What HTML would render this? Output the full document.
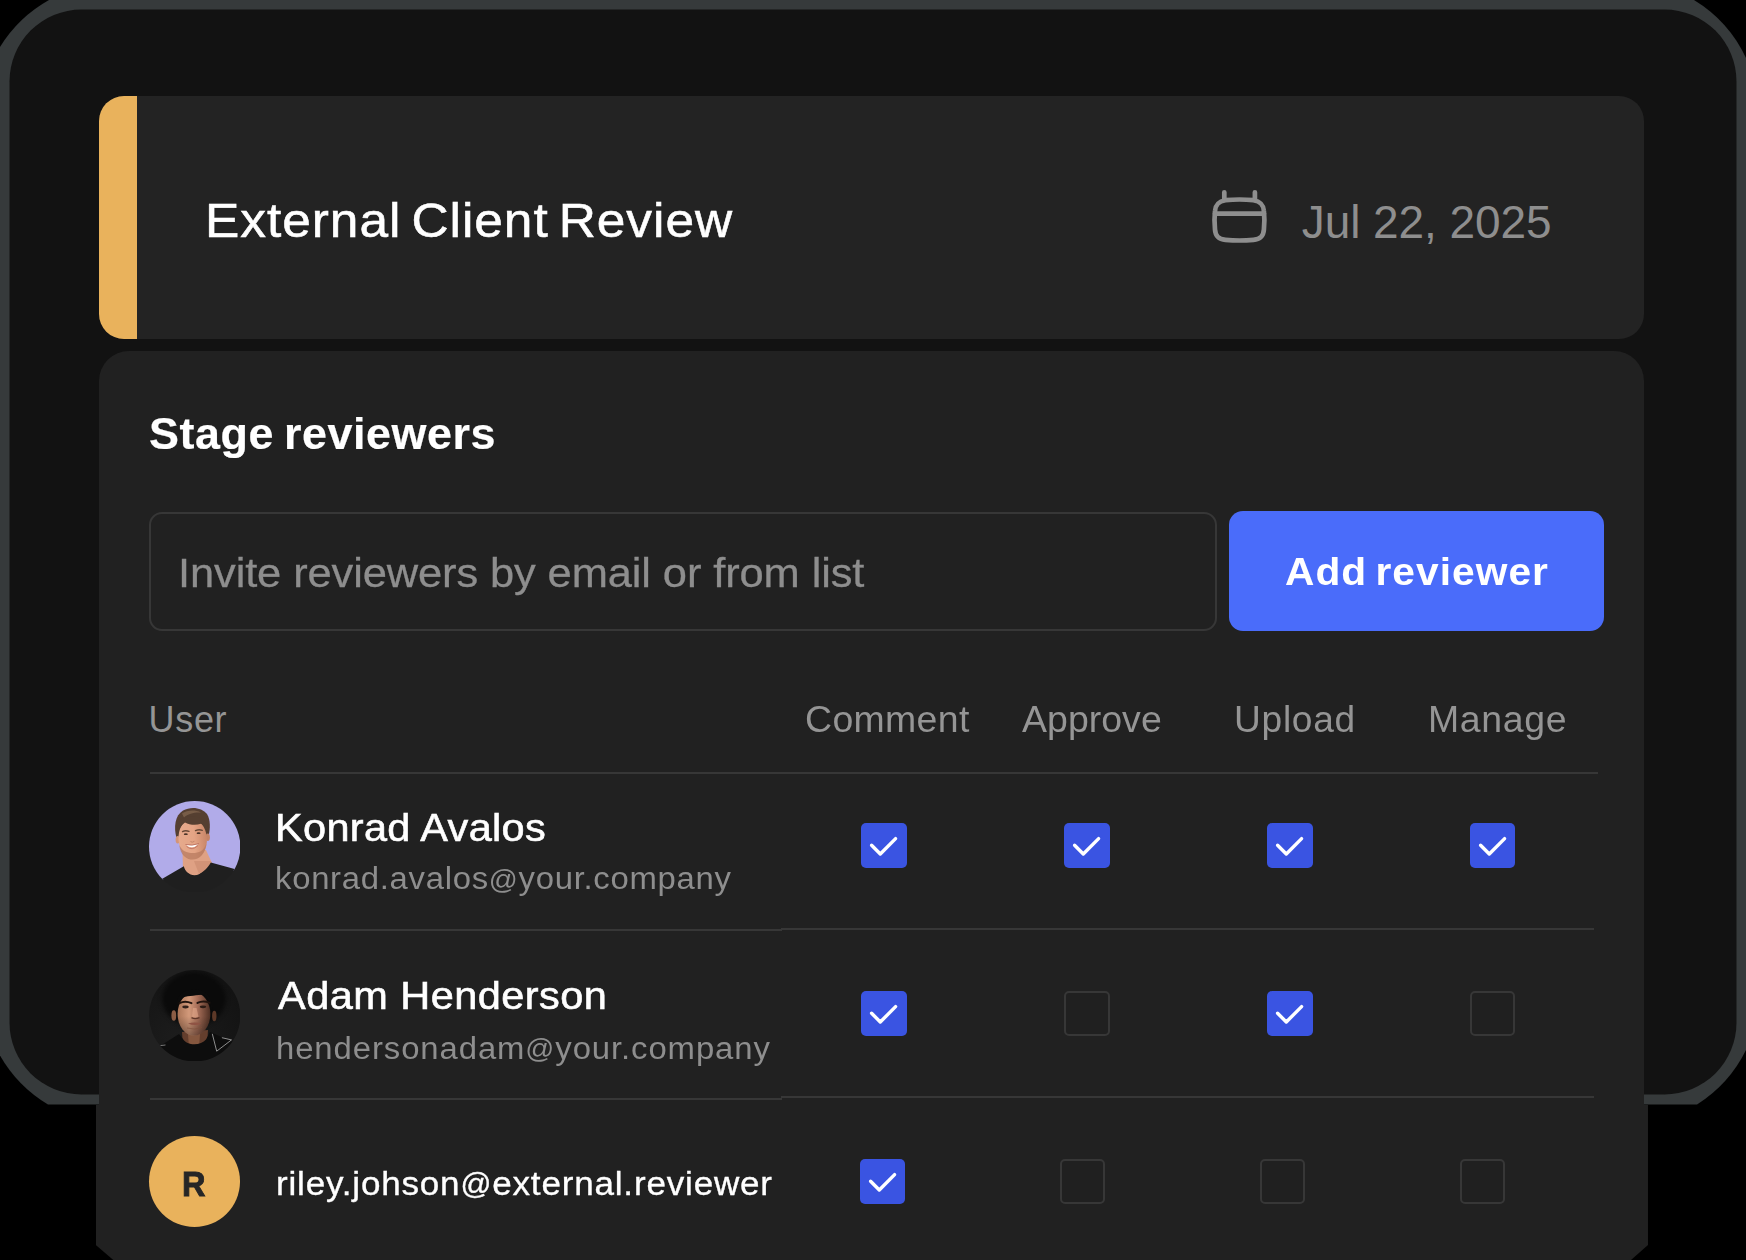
<!DOCTYPE html>
<html>
<head>
<meta charset="utf-8">
<style>
*{margin:0;padding:0;box-sizing:border-box}
html,body{width:1746px;height:1260px;background:#000;overflow:hidden}
body{position:relative;font-family:"Liberation Sans",sans-serif;color:#fff}
.abs{position:absolute}
.t{position:absolute;white-space:nowrap;line-height:1}
#hdr{left:99px;top:96px;width:1545px;height:242.5px;background:#232323;border-radius:25px;overflow:hidden}
#strip{left:0;top:0;width:38px;height:243px;background:#e9b25c}
#panel{left:99px;top:351px;width:1545px;height:756px;background:#212121;border-radius:30px 30px 0 0}
#panel2{left:95.8px;top:1104.5px;width:1552.2px;height:155.5px;background:#212121;clip-path:polygon(0 0,100% 0,100% 140.5px,1535.2px 100%,17.5px 100%,0 140.5px)}
.line{position:absolute;height:2px;background:#373737}
.cb{position:absolute;width:45.4px;height:45.4px;border-radius:5px}
.cb.on{background:#3a54e2}
.cb.off{border:2.6px solid #373737;background:#202020;border-radius:5px}
.cb svg{position:absolute;left:0;top:0}
.gray{color:#8e8e8e}
.av{position:absolute;width:91.4px;height:91.4px}
</style>
</head>
<body>
<svg id="frame" class="abs" style="left:0;top:0" width="1746" height="1260" viewBox="0 0 1746 1260">
<path d="M49 0H1694A135 135 0 0 1 1746 58V1050A135 135 0 0 1 1697 1104.5H48A135 135 0 0 1 0 1055.5V47A135 135 0 0 1 49 0Z" fill="#363a3b"/>
<rect x="9.5" y="9.5" width="1727" height="1085" rx="72" fill="#121212"/>
</svg>
<div id="hdr" class="abs"><div id="strip" class="abs"></div></div>
<div id="panel" class="abs"></div>
<div id="panel2" class="abs"></div>

<svg id="cal" class="abs" style="left:1200px;top:180px" width="80" height="72" viewBox="0 0 80 72" fill="none" stroke="#8e8e8e" stroke-width="4.7" stroke-linecap="round" stroke-linejoin="round">
<path d="M25.5 20.2Q39.45 18.8 53.4 20.2C60.5 21.4 63.4 24.5 63.9 31Q64.9 40 63.9 49.5C63.4 56.5 60.5 59.1 53.4 59.8Q39.45 61.2 25.5 59.8C18.4 59.1 15.5 56.5 15 49.5Q14 40 15 31C15.5 24.5 18.4 21.4 25.5 20.2Z"/><path d="M15 33.7H64M24.3 12.3V19.5M54.9 12.3V19.5"/></svg>

<div id="input" class="abs" style="left:149px;top:511.5px;width:1067.5px;height:119px;border:2px solid #373737;border-radius:13px"></div>
<div id="btn" class="abs" style="left:1229px;top:511px;width:374.5px;height:119.5px;background:#4a6cfa;border-radius:14px"></div>

<div class="line" style="left:149.5px;top:772.1px;width:1448px"></div>
<div class="line" style="left:149.5px;top:929.1px;width:632px"></div>
<div class="line" style="left:781px;top:928px;width:812.7px"></div>
<div class="line" style="left:149.5px;top:1097.6px;width:632px"></div>
<div class="line" style="left:781px;top:1096.4px;width:812.7px"></div>

<svg id="av1" class="av" style="left:148.9px;top:800.9px" viewBox="0 0 91.4 91.4">
<defs><clipPath id="c1"><circle cx="45.7" cy="45.7" r="45.7"/></clipPath>
<filter color-interpolation-filters="sRGB" id="b1" x="-10%" y="-10%" width="120%" height="120%"><feGaussianBlur stdDeviation="0.75"/></filter>
<linearGradient id="sk1" x1="0" x2="1"><stop offset="0" stop-color="#e6aa8c"/><stop offset="0.55" stop-color="#e4a485"/><stop offset="1" stop-color="#c98668"/></linearGradient>
</defs>
<g clip-path="url(#c1)">
<path d="M-2 -2H95V73L86.5 70.3L61.8 63.4L45 76L34.8 67.2L12.5 80.3L-2 92Z" fill="#b1abe9"/>
<g filter="url(#b1)">
<path d="M33.5 50L34 69L45.5 77L63.5 63L57 49Z" fill="#dfa184"/>
<path d="M45 60L62 60L58 69L50 73Z" fill="#c98a6e" opacity="0.6"/>
<path d="M-2 95L12.5 78.3L34.8 65.2C36 70 40 74 45.5 74.3C52 74 58 68 61.8 61.4L86.5 68.3L95 95Z" fill="#1f1f1f"/>
<path d="M27.5 37C24.5 26 26 14.5 34 9.5C42 5 53 6.5 58 13C61.5 19 61.5 27 59.6 34.5L56 37L30 39Z" fill="#553f31"/>
<ellipse cx="28.7" cy="38.8" rx="2.1" ry="3.8" fill="#d39477"/>
<ellipse cx="58.8" cy="36.2" rx="2.1" ry="3.8" fill="#c48467"/>
<ellipse cx="43.7" cy="38" rx="14.2" ry="20.2" fill="url(#sk1)" transform="rotate(-4 43.7 38)"/>
<path d="M30.3 44C31.5 54 37 58.6 43.8 58.6C50.5 58.6 56 53 57.3 43C54.5 50 50 52 43.8 52C37.5 52 33 50 30.3 44Z" fill="#b5785c" opacity="0.7"/>
<path d="M28.4 33C28 24 31 17.5 37 16C44 14.5 53 16 57.5 21.5C59 25 59.5 29 59.3 32C57.5 27 55 24 52 22.8C47 24.5 40.5 24 36 21.5C32 24 30 28 28.4 33Z" fill="#553f31"/>
<path d="M33 12.5C38 9 46 8.5 52 11.5C46 11 39 12.5 35 16.5Z" fill="#80644e" opacity="0.8"/>
<path d="M33.5 30.6Q36.5 29 40 30.4M46.5 29.7Q50 28 53.3 29.4" stroke="#6a4a38" stroke-width="1.3" fill="none" stroke-linecap="round"/>
<ellipse cx="36.8" cy="33.2" rx="2" ry="0.9" fill="#4a3328"/>
<ellipse cx="49.6" cy="32.2" rx="2" ry="0.9" fill="#4a3328"/>
<path d="M41.5 40.5Q43 42 45.5 40.3" stroke="#c4866a" stroke-width="1" fill="none"/>
<path d="M37 43.8Q43 49.3 49.4 42.9Q43 45 37 43.8Z" fill="#fff"/>
<path d="M36.5 43.5Q43 45.2 49.9 42.6" stroke="#b56a5a" stroke-width="0.8" fill="none"/>
<path d="M37.5 45.4Q43 50.4 49 44.6" stroke="#c37868" stroke-width="1" fill="none"/>
</g>
</g>
</svg>

<svg id="av2" class="av" style="left:149.1px;top:969.5px" viewBox="0 0 91.4 91.4">
<defs><clipPath id="c2"><circle cx="45.7" cy="45.7" r="45.7"/></clipPath>
<filter color-interpolation-filters="sRGB" id="b2" x="-10%" y="-10%" width="120%" height="120%"><feGaussianBlur stdDeviation="0.6"/></filter>
<filter color-interpolation-filters="sRGB" id="b2b" x="-20%" y="-20%" width="140%" height="140%"><feGaussianBlur stdDeviation="2"/></filter>
<linearGradient id="sk2" x1="0" x2="1"><stop offset="0" stop-color="#a87356"/><stop offset="0.35" stop-color="#d39a7b"/><stop offset="0.6" stop-color="#a9705a"/><stop offset="1" stop-color="#4e2f23"/></linearGradient>
<linearGradient id="sh2" x1="0" x2="0" y1="0" y2="1"><stop offset="0.55" stop-color="#000" stop-opacity="0"/><stop offset="1" stop-color="#000" stop-opacity="0.35"/></linearGradient>
<radialGradient id="bg2" cx="0.3" cy="0.75" r="0.8"><stop offset="0" stop-color="#1c1c1c"/><stop offset="1" stop-color="#131313"/></radialGradient>
</defs>
<g clip-path="url(#c2)">
<rect width="91.4" height="91.4" fill="url(#bg2)"/>
<ellipse cx="45" cy="29" rx="32" ry="27" fill="#0a0a0a" filter="url(#b2b)"/>
<g filter="url(#b2)">
<path d="M33 62L34 78L58 78L59 60Z" fill="#643e2d"/>
<path d="M39 64L40 78L50 78L51 64Z" fill="#85573f"/>
<path d="M-2 95L8 78L30 64L34 69C38 76 52 76 57 69.5L61 62L84 72L95 95Z" fill="#0d0d0d"/>
<ellipse cx="24.8" cy="45.5" rx="2.4" ry="5.3" fill="#8c5d45"/>
<ellipse cx="65.3" cy="46" rx="2.2" ry="5.3" fill="#5d3827"/>
<ellipse cx="45" cy="44" rx="16.4" ry="21.6" fill="url(#sk2)"/>
<ellipse cx="45" cy="44" rx="16.4" ry="21.6" fill="url(#sh2)"/>
<path d="M27 40C26.5 27 33 19.5 45 19.5C57 19.5 64 27 63.2 41C61.5 33 59 28 55 24.5C49 25.5 39 25.5 34.5 27.5C30 31 28 35 27 40Z" fill="#0b0b0b"/>
<path d="M30.5 33.2Q36 30.2 42.5 33.2M48.5 33Q54 30 60.5 32.8" stroke="#22140e" stroke-width="2" fill="none" stroke-linecap="round"/>
<ellipse cx="36.5" cy="37" rx="3.2" ry="1.4" fill="#33211a"/>
<ellipse cx="54" cy="36.8" rx="3.2" ry="1.4" fill="#2c1c15"/>
<path d="M44 38L43 46.5Q46 48.5 49.5 46.5L47.5 38Z" fill="#e2a98a" opacity="0.6"/>
<path d="M42.5 47.6Q46 49.6 50.5 47.6" stroke="#5f3628" stroke-width="1.3" fill="none"/>
<path d="M39 53.5Q45.5 51.6 52.5 53.5Q46 56.6 39 53.5Z" fill="#8f5344"/>
<path d="M38 58Q45.5 60.4 53 57.5" stroke="#7d4f3b" stroke-width="1" fill="none" opacity="0.6"/>
</g>
<path d="M63.3 63.8L67.7 81.2L82.5 69.9L72.9 67.7" stroke="#c4c4c4" stroke-width="0.7" fill="none" stroke-linejoin="round"/>
<path d="M11.5 75.6L16.5 75" stroke="#a8a8a8" stroke-width="0.7" fill="none"/>
</g>
</svg>

<div id="av3" class="abs" style="left:149px;top:1136px;width:91.3px;height:91.3px;border-radius:50%;background:#e9b25c"></div>

<div class="cb on" style="left:861.2px;top:822.7px"><svg width="45.4" height="45.4" viewBox="0 0 45.4 45.4" fill="none" stroke="#fff" stroke-width="3.4" stroke-linecap="round" stroke-linejoin="round"><path d="M10.6 22.2L19.3 31L34.6 15.6"/></svg></div>
<div class="cb on" style="left:1064.4px;top:822.7px"><svg width="45.4" height="45.4" viewBox="0 0 45.4 45.4" fill="none" stroke="#fff" stroke-width="3.4" stroke-linecap="round" stroke-linejoin="round"><path d="M10.6 22.2L19.3 31L34.6 15.6"/></svg></div>
<div class="cb on" style="left:1267.3px;top:822.7px"><svg width="45.4" height="45.4" viewBox="0 0 45.4 45.4" fill="none" stroke="#fff" stroke-width="3.4" stroke-linecap="round" stroke-linejoin="round"><path d="M10.6 22.2L19.3 31L34.6 15.6"/></svg></div>
<div class="cb on" style="left:1470.0px;top:822.7px"><svg width="45.4" height="45.4" viewBox="0 0 45.4 45.4" fill="none" stroke="#fff" stroke-width="3.4" stroke-linecap="round" stroke-linejoin="round"><path d="M10.6 22.2L19.3 31L34.6 15.6"/></svg></div>
<div class="cb on" style="left:861.2px;top:991.0px"><svg width="45.4" height="45.4" viewBox="0 0 45.4 45.4" fill="none" stroke="#fff" stroke-width="3.4" stroke-linecap="round" stroke-linejoin="round"><path d="M10.6 22.2L19.3 31L34.6 15.6"/></svg></div>
<div class="cb off" style="left:1064.2px;top:991.0px"></div>
<div class="cb on" style="left:1267.3px;top:991.0px"><svg width="45.4" height="45.4" viewBox="0 0 45.4 45.4" fill="none" stroke="#fff" stroke-width="3.4" stroke-linecap="round" stroke-linejoin="round"><path d="M10.6 22.2L19.3 31L34.6 15.6"/></svg></div>
<div class="cb off" style="left:1470.0px;top:991.0px"></div>
<div class="cb on" style="left:860.0px;top:1159.1px"><svg width="45.4" height="45.4" viewBox="0 0 45.4 45.4" fill="none" stroke="#fff" stroke-width="3.4" stroke-linecap="round" stroke-linejoin="round"><path d="M10.6 22.2L19.3 31L34.6 15.6"/></svg></div>
<div class="cb off" style="left:1060.0px;top:1159.1px"></div>
<div class="cb off" style="left:1260.0px;top:1159.1px"></div>
<div class="cb off" style="left:1460.0px;top:1159.1px"></div>
<div id="title" class="t " style="left:205.1px;top:196.0px;font-size:49px;letter-spacing:0.91px;-webkit-text-stroke:0.55px #fff;word-spacing:-5px;transform:scaleX(1.05);transform-origin:0 0;">External Client Review</div>
<div id="date" class="t gray" style="left:1301.7px;top:198.7px;font-size:46px;letter-spacing:-0.06px;">Jul 22, 2025</div>
<div id="stage" class="t " style="left:148.7px;top:412.0px;font-size:44px;letter-spacing:0.54px;font-weight:bold;-webkit-text-stroke:0.2px #fff;word-spacing:-3px;transform:scaleX(1.02);transform-origin:0 0;">Stage reviewers</div>
<div id="ph" class="t gray" style="left:177.5px;top:552.5px;font-size:41px;letter-spacing:-0.11px;-webkit-text-stroke:0.3px #8e8e8e;transform:scaleX(1.06);transform-origin:0 0;">Invite reviewers by email or from list</div>
<div id="btnt" class="t " style="left:1285.2px;top:552.2px;font-size:39.5px;letter-spacing:1.02px;font-weight:bold;word-spacing:-4px;transform:scaleX(1.03);transform-origin:0 0;">Add reviewer</div>
<div id="h0" class="t gray" style="left:148.6px;top:701.5px;font-size:36px;letter-spacing:0.66px;color:#959595;">User</div>
<div id="h1" class="t gray" style="left:804.6px;top:701.5px;font-size:36px;letter-spacing:0.33px;color:#959595;transform:scaleX(1.04);transform-origin:0 0;">Comment</div>
<div id="h2" class="t gray" style="left:1021.6px;top:701.5px;font-size:36px;letter-spacing:0.04px;color:#959595;transform:scaleX(1.04);transform-origin:0 0;">Approve</div>
<div id="h3" class="t gray" style="left:1233.6px;top:701.5px;font-size:36px;letter-spacing:0.72px;color:#959595;transform:scaleX(1.03);transform-origin:0 0;">Upload</div>
<div id="h4" class="t gray" style="left:1427.6px;top:701.5px;font-size:36px;letter-spacing:0.64px;color:#959595;transform:scaleX(1.04);transform-origin:0 0;">Manage</div>
<div id="n1" class="t " style="left:275.2px;top:807.8px;font-size:39.5px;letter-spacing:0.32px;-webkit-text-stroke:0.6px #fff;transform:scaleX(1.05);transform-origin:0 0;">Konrad Avalos</div>
<div id="e1" class="t gray" style="left:275.2px;top:863.2px;font-size:31px;letter-spacing:0.67px;transform:scaleX(1.06);transform-origin:0 0;">konrad.avalos<span style="font-size:0.87em;position:relative;top:-0.02em">@</span>your.company</div>
<div id="n2" class="t " style="left:278.2px;top:976.2px;font-size:39.5px;letter-spacing:0.45px;-webkit-text-stroke:0.6px #fff;transform:scaleX(1.05);transform-origin:0 0;">Adam Henderson</div>
<div id="e2" class="t gray" style="left:275.8px;top:1032.7px;font-size:31px;letter-spacing:0.86px;transform:scaleX(1.06);transform-origin:0 0;">hendersonadam<span style="font-size:0.87em;position:relative;top:-0.02em">@</span>your.company</div>
<div id="r" class="t " style="left:182.3px;top:1165.7px;font-size:35px;letter-spacing:0px;font-weight:bold;color:#262626;-webkit-text-stroke:0.9px #262626;transform:scaleX(0.93);transform-origin:0 0;">R</div>
<div id="e3" class="t " style="left:276.2px;top:1166.0px;font-size:34px;letter-spacing:0.8px;-webkit-text-stroke:0.35px #fff;transform:scaleX(1.03);transform-origin:0 0;">riley.johson<span style="font-size:0.87em;position:relative;top:-0.02em">@</span>external.reviewer</div>
</body>
</html>
